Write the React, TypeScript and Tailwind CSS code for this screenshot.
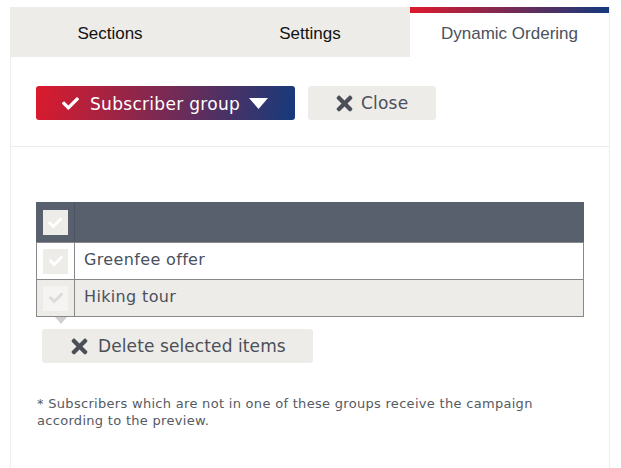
import React from "react";
import { FaCheck, FaTimes } from "react-icons/fa";

function Caret() {
  return (
    <svg width="19" height="11" viewBox="0 0 19 11">
      <polygon points="0,0 19,0 9.5,11" fill="#ffffff" />
    </svg>
  );
}

function Box({ tone }: { tone: "head" | "white" | "gray" }) {
  const bg = tone === "gray" ? "bg-[#f5f4f2]" : "bg-[#eeece9]";
  const ic = tone === "gray" ? "#dddbd7" : "#ffffff";
  return (
    <div className={`w-[25px] h-[25px] ${bg} flex items-center justify-center`}>
      <FaCheck size={14} color={ic} />
    </div>
  );
}

export default function App() {
  return (
    <div className="min-h-screen bg-white pl-[10px] pt-[7px] font-['DejaVu_Sans',Verdana,sans-serif]">
      <div className="w-[600px]">
        <div className="flex h-[50px] font-['Liberation_Sans',Arial,sans-serif] text-[17px]">
          <div className="w-[200px] bg-[#eeece9] flex items-center justify-center pt-[3px] text-[#111111]">Sections</div>
          <div className="w-[200px] bg-[#eeece9] flex items-center justify-center pt-[3px] text-[#111111]">Settings</div>
          <div className="w-[200px] bg-white bg-[linear-gradient(to_right,#dd1a2c,#123a7c)] bg-no-repeat bg-[length:100%_6px] flex items-center justify-center pt-[3px] text-[#4b515d] border-r border-[#eeeeee]">
            Dynamic Ordering
          </div>
        </div>
        <div className="border-x border-[#eeeeee] pb-[40px]">
          <div className="px-[25px] pt-[29px] pb-[26px] border-b border-[#ebebeb] flex gap-[13px]">
            <div className="w-[259px] h-[34px] rounded-[3px] bg-[linear-gradient(100deg,#dc1a2c,#153a7b)] flex items-center pl-[26px] text-white text-[17px] tracking-[0.3px]">
              <FaCheck size={17} color="#ffffff" />
              <span className="ml-[11px] pt-[3px]">Subscriber group</span>
              <span className="ml-[9px] flex"><Caret /></span>
            </div>
            <div className="w-[128px] h-[34px] rounded-[3px] bg-[#eeece9] flex items-center pl-[25px] text-[#4b4f58] text-[17px] tracking-[0.2px]">
              <FaTimes size={23} color="#4b4f58" />
              <span className="ml-[5px] pt-[2px]">Close</span>
            </div>
          </div>
          <div className="px-[25px] pt-[55px]">
            <div className="w-[548px]">
              <div className="flex h-[40px] bg-[#585f6d]">
                <div className="w-[39px] border-r border-[#4d5361] flex justify-center pt-[8px]">
                  <Box tone="head" />
                </div>
              </div>
              <div className="flex h-[37px] border-x border-t border-[#888888] bg-white">
                <div className="w-[38px] border-r border-[#888888] flex items-center justify-center">
                  <Box tone="white" />
                </div>
                <div className="flex items-center pl-[9px] pb-[2px] text-[16px] tracking-[0.35px] text-[#4b515d]">Greenfee offer</div>
              </div>
              <div className="flex h-[38px] border border-[#888888] bg-[#eeece9]">
                <div className="w-[38px] border-r border-[#888888] flex items-center justify-center">
                  <Box tone="gray" />
                </div>
                <div className="flex items-center pl-[9px] pb-[2px] text-[16px] tracking-[0.35px] text-[#4b515d]">Hiking tour</div>
              </div>
              <div className="ml-[19px] flex">
                <svg width="12" height="7" viewBox="0 0 12 7">
                  <polygon points="0,0 12,0 6,7" fill="#cfcfcf" />
                </svg>
              </div>
              <div className="ml-[6px] mt-[5px] w-[271px] h-[34px] rounded-[3px] bg-[#eeece9] flex items-center pl-[26px] text-[#4b4f58] text-[17px] tracking-[0.1px]">
                <FaTimes size={23} color="#4b4f58" />
                <span className="ml-[7px] pt-[1px]">Delete selected items</span>
              </div>
              <p className="mt-[32px] ml-[1px] text-[13px] leading-[17px] tracking-[0.3px] text-[#555a63]">
                * Subscribers which are not in one of these groups receive the campaign according to the preview.
              </p>
            </div>
          </div>
        </div>
      </div>
    </div>
  );
}
